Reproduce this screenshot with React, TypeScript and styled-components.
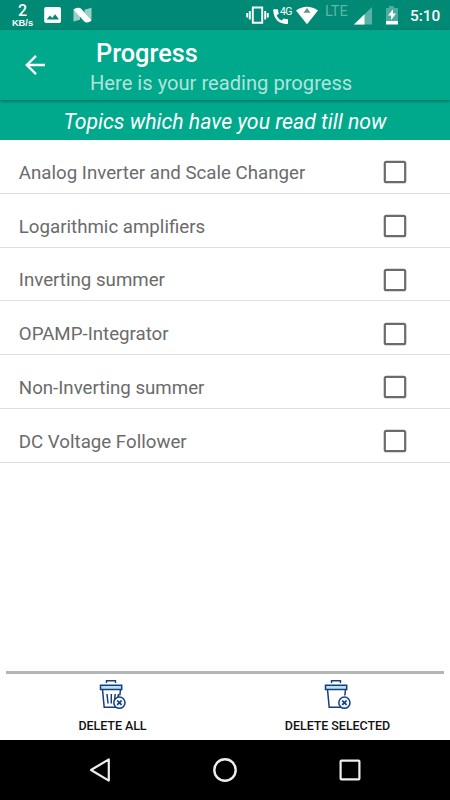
import React, { useState } from "react";
import styled, { createGlobalStyle } from "styled-components";

const GlobalStyle = createGlobalStyle`
  *, *::before, *::after { box-sizing: border-box; }
  body { margin: 0; background: #fff; font-family: Roboto, sans-serif; }
`;

const Screen = styled.div`
  display: flex;
  flex-direction: column;
  width: 450px;
  height: 800px;
  overflow: hidden;
  background: #fff;
`;

const StatusBar = styled.div`
  display: flex;
  align-items: center;
  justify-content: space-between;
  height: 30px;
  flex: none;
  padding: 0 10px 0 11px;
  background: #008975;
  color: #fff;
`;

const StatusGroup = styled.div<{ $columns: string }>`
  display: grid;
  grid-template-columns: ${(p) => p.$columns};
  height: 30px;
  align-items: center;

  svg { display: block; height: 30px; width: 100%; }
`;

const NetSpeed = styled.div`
  display: flex;
  flex-direction: column;
  align-items: center;
  width: 23px;
  font-family: "Liberation Sans", sans-serif;
  font-size: 9.3px;
  line-height: 10px;
  font-weight: 700;
  white-space: nowrap;

  strong { font-family: Roboto, sans-serif; font-size: 16px; line-height: 15px; font-weight: 500; }
`;

const NetworkType = styled.span`
  font-size: 14.5px;
  line-height: 16px;
  align-self: start;
  margin-top: 3.5px;
  color: rgba(255, 255, 255, 0.38);
`;

const PhoneStatus = styled.div`
  position: relative;
`;

const PhoneBadge = styled.span`
  position: absolute;
  left: 7px;
  top: 5.5px;
  font-size: 10.5px;
  line-height: 12px;
  letter-spacing: -0.7px;
`;

const Clock = styled.span`
  font-size: 15.4px;
  line-height: 18px;
  font-weight: 500;
  padding-top: 2px;
  white-space: nowrap;
`;

const AppBar = styled.header`
  display: flex;
  height: 70px;
  flex: none;
  z-index: 1;
  background: #00a98c;
  color: #fff;
  box-shadow: 0 1px 3px rgba(0, 50, 40, 0.6);
`;

const BackButton = styled.button`
  width: 70px;
  height: 70px;
  padding: 0;
  border: 0;
  background: none;
  color: inherit;

  svg { display: block; }
`;

const Titles = styled.div`
  display: flex;
  flex-direction: column;
  padding: 9px 0 0 20px;
`;

const Title = styled.h1`
  margin: 0 0 0 6px;
  font-size: 25.3px;
  line-height: 30px;
  font-weight: 500;
`;

const Subtitle = styled.div`
  font-size: 20.15px;
  line-height: 24px;
  margin-top: 2px;
  color: rgba(255, 255, 255, 0.7);
  white-space: nowrap;
`;

const Banner = styled.h2`
  margin: 0;
  height: 40px;
  flex: none;
  background: #00a98c;
  color: #fff;
  font-size: 21.25px;
  line-height: 43px;
  font-weight: 400;
  font-style: italic;
  text-align: center;
`;

const TopicList = styled.ul`
  margin: 0;
  padding: 0;
  list-style: none;
  flex: 1;
`;

const TopicRow = styled.li`
  display: flex;
  align-items: center;
  justify-content: space-between;
  height: 53.75px;
  padding: 12px 43px 0 18.8px;
  border-bottom: 1.25px solid #dedede;
  font-size: 18.7px;
  line-height: 24px;
  color: #6b6b6b;
`;

const TopicName = styled.span`
  padding-top: 1px;
`;

const CheckBox = styled.button`
  display: block;
  width: 24px;
  height: 24px;
  padding: 0;
  border: 0;
  background: none;

  svg { display: block; }
`;

const ActionBar = styled.footer`
  display: grid;
  grid-template-columns: 1fr 1fr;
  height: 69px;
  flex: none;
  margin: 0 6px;
  border-top: 3px solid #b5b5b5;
`;

const Action = styled.button<{ $shift?: number }>`
  display: flex;
  flex-direction: column;
  align-items: center;
  padding: 5px 0 0;
  margin: 0 ${(p) => (p.$shift ?? 0) * -1}px 0 ${(p) => p.$shift ?? 0}px;
  border: 0;
  background: none;
  font-family: inherit;
  font-size: 12.5px;
  line-height: 16px;
  font-weight: 500;
  letter-spacing: -0.06px;
  color: #111;
  white-space: nowrap;

  svg { display: block; margin-bottom: 7px; }
`;

const NavBar = styled.nav`
  display: grid;
  grid-template-columns: 125px 125px 125px;
  justify-content: center;
  align-items: center;
  justify-items: center;
  height: 60px;
  flex: none;
  background: #000;

  svg { display: block; }
`;

const TrashIcon = ({ full = false }: { full?: boolean }) => (
  <svg width="30" height="32" viewBox="0 0 30 32" fill="none" stroke="#173e7c" strokeWidth="1.5">
    <path d="M8.500 4V1.800h9V4" strokeWidth="1.400" />
    <path d="M4.500 10.500l1.700 17.700H18M22.500 10.500l-.7 6" />
    <path d="M2.500 6.200h21.200v4.300H2.500z" fill="#b7e2f6" />
    {full && <path d="M9 15l1 9.500M13.300 15v9.500M17.200 15l-.7 7M20.500 15l-.5 3" />}
    <circle cx="21.400" cy="23.700" r="5.600" fill="#eef8fd" />
    <path d="M19.200 21.500l4.400 4.400M23.600 21.500l-4.400 4.400" strokeWidth="1.700" />
  </svg>
);

const TOPICS = [
  "Analog Inverter and Scale Changer",
  "Logarithmic amplifiers",
  "Inverting summer",
  "OPAMP-Integrator",
  "Non-Inverting summer",
  "DC Voltage Follower",
];

export default function App() {
  const [selected, setSelected] = useState<string[]>([]);
  const [topics, setTopics] = useState(TOPICS);
  const toggle = (t: string) =>
    setSelected((s) => (s.includes(t) ? s.filter((x) => x !== t) : [...s, t]));

  return (
    <Screen>
      <GlobalStyle />
      <StatusBar>
        <StatusGroup $columns="33px 29px 21px">
          <NetSpeed>
            <strong>2</strong>
            <span>KB/s</span>
          </NetSpeed>
          <svg viewBox="44 0 29 30">
            <path fillRule="evenodd" fill="#fff" d="M46 7h13.200q1.800 0 1.800 1.800v12.400q0 1.800-1.800 1.800H46q-1.800 0-1.800-1.800V8.800Q44.200 7 46 7zM46.500 19.500h12.500l-3.800-5.200-3 3.700-2.200-2.500z" />
          </svg>
          <svg viewBox="73 0 21 30">
            <path fill="#fff" opacity=".6" d="M73.500 9.500l6.500 1v9.200l-6.500 1.700zM84.500 9.800l7-2v12.700l-7-1z" />
            <path fill="#fff" d="M73.500 9.500Q75.500 7.800 78 7.800q2.200-.1 3.400 1.200l10.100 11.500Q89.500 22.400 87 22.400q-2 0-3-1.200z" />
          </svg>
        </StatusGroup>
        <StatusGroup $columns="27px 23px 29px 29px 31px 25px 30px">
          <svg viewBox="246 0 27 30">
            <path fill="none" stroke="#fff" strokeWidth="1.900" d="M252.800 7.500h9.400v15.200h-9.400zM249.800 11v8.400M265.200 11v8.400M247.200 13v4.500M267.800 13v4.500" />
          </svg>
          <PhoneStatus>
            <svg viewBox="273 0 23 30">
              <path fill="#fff" d="M274 9.300h3.200q.8 0 .9.800.1 1.800.7 3.300l-2.200 2.300q1.800 3.200 5 4.900l2.200-2.100q1.700.5 3.400.6.800.1.800.9v3.300q0 .8-.9.800Q274 23.500 273.200 10.200q0-.9.800-.9z" />
            </svg>
            <PhoneBadge>4G</PhoneBadge>
          </PhoneStatus>
          <svg viewBox="296 0 29 30">
            <path fill="#fff" d="M296 10.500Q307 3 318 10.500L307 24.300z" />
            <path fill="#6f8c86" d="M307 8l3.500 4.700h-7z" />
          </svg>
          <NetworkType>LTE</NetworkType>
          <svg viewBox="354 0 31 30">
            <path fill="#fff" opacity=".35" d="M372 7v17.500h-18z" />
            <path fill="#fff" d="M364.500 14.300v10.200H354z" />
          </svg>
          <svg viewBox="385 0 25 30">
            <path fill="#fff" opacity=".3" d="M386 8h3V6h5v2h4v13h-12z" />
            <path fill="#fff" d="M386 21h12v3.500h-12zM393 9.300v4.200h3l-5 6.700v-4.700h-3z" />
          </svg>
          <Clock>5:10</Clock>
        </StatusGroup>
      </StatusBar>

      <AppBar>
        <BackButton aria-label="Back">
          <svg width="70" height="70" viewBox="0 0 70 70" fill="none" stroke="#fff" strokeWidth="2.400">
            <path d="M45 35H27M36 25.800L26.800 35l9.200 9.200" />
          </svg>
        </BackButton>
        <Titles>
          <Title>Progress</Title>
          <Subtitle>Here is your reading progress</Subtitle>
        </Titles>
      </AppBar>
      <Banner>Topics which have you read till now</Banner>

      <TopicList>
        {topics.map((t) => (
          <TopicRow key={t}>
            <TopicName>{t}</TopicName>
            <CheckBox role="checkbox" aria-label={t} aria-checked={selected.includes(t)} onClick={() => toggle(t)}>
              <svg width="24" height="24" viewBox="0 0 24 24" fill="none" stroke="#6b6b6b" strokeWidth="2.200">
                <rect x="1.800" y="1.800" width="20.400" height="20.400" rx="1.500" />
                {selected.includes(t) && <path d="M6 12l4 4 8-8" />}
              </svg>
            </CheckBox>
          </TopicRow>
        ))}
      </TopicList>

      <ActionBar>
        <Action $shift={-3} onClick={() => setTopics([])}>
          <TrashIcon full />
          DELETE ALL
        </Action>
        <Action $shift={3} onClick={() => setTopics((ts) => ts.filter((t) => !selected.includes(t)))}>
          <TrashIcon />
          DELETE SELECTED
        </Action>
      </ActionBar>
      <NavBar>
        <svg width="26" height="26" viewBox="0 0 26 26" fill="none" stroke="#eee" strokeWidth="2.200" strokeLinejoin="round">
          <path d="M21.800 2.400v21.200L4 13z" />
        </svg>
        <svg width="26" height="26" viewBox="0 0 26 26" fill="none" stroke="#eee" strokeWidth="2.400">
          <circle cx="13" cy="13" r="10.700" />
        </svg>
        <svg width="26" height="26" viewBox="0 0 26 26" fill="none" stroke="#eee" strokeWidth="2.200">
          <rect x="3.600" y="3.600" width="18.800" height="18.800" rx=".8" />
        </svg>
      </NavBar>
    </Screen>
  );
}
